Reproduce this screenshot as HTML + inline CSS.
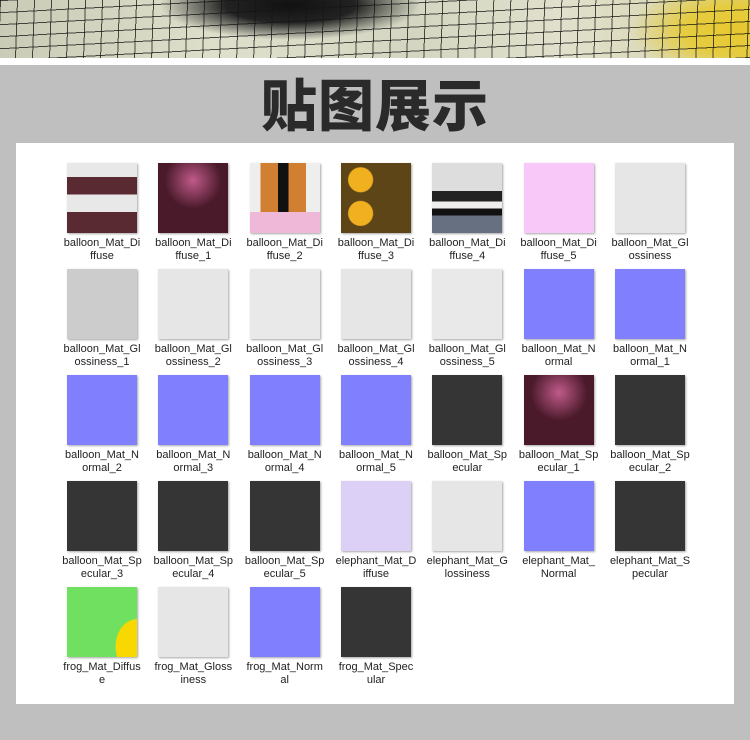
<!DOCTYPE html>
<html><head><meta charset="utf-8"><style>
*{margin:0;padding:0;box-sizing:border-box}
body{width:750px;height:740px;background:#bfbfbf;position:relative;overflow:hidden;font-family:"Liberation Sans","Noto Sans CJK SC",sans-serif}
#banner{position:absolute;left:0;top:0;width:750px;height:58px;
background:
repeating-linear-gradient(92deg,rgba(20,20,20,.75) 0 1px,transparent 1px 17px),
repeating-linear-gradient(-3deg,rgba(20,20,20,.75) 0 1px,transparent 1px 12px),
radial-gradient(ellipse 130px 35px at 290px 5px,#111 0,#222 50%,rgba(40,40,40,0) 100%),
radial-gradient(ellipse 110px 50px at 740px 30px,#e8c830 0,#e5cc40 50%,rgba(230,210,80,0) 100%),
linear-gradient(90deg,#c9cbb6,#dfe0cc 30%,#d4d6c2 55%,#e0e0cc 75%,#d9d4a8)}
#strip{position:absolute;left:0;top:58px;width:750px;height:7px;background:#fff}
#title{position:absolute;left:0;top:70px;width:750px;text-align:center;font-size:56px;font-weight:900;color:#2a2a2a;letter-spacing:1px;line-height:66px;font-family:"Noto Sans CJK SC","WenQuanYi Zen Hei",sans-serif}
#panel{position:absolute;left:16px;top:143px;width:718px;height:561px;background:#fff}
.it{position:absolute;width:92px}
.t{position:absolute;left:11px;top:0;width:70px;height:70px;box-shadow:1px 1px 2px rgba(0,0,0,.35)}
.l{position:absolute;left:0;top:74px;width:92px;text-align:center;font-size:11px;line-height:13px;color:#222;word-break:break-all}
</style></head><body>
<div id="banner"></div><div id="strip"></div>
<div id="title">贴图展示</div>
<div id="panel"></div>
<div id="items"></div>
<script>
var d=[
["balloon_Mat_Di","ffuse","linear-gradient(180deg,#e8e8e8 0 20%,#5a2a33 20% 45%,#e8e8e8 45% 70%,#5a2a33 70%)"],
["balloon_Mat_Di","ffuse_1","radial-gradient(circle at 50% 25%,#c05a8a,#4a1a2a 45%),#4a1a2a"],
["balloon_Mat_Di","ffuse_2","linear-gradient(180deg,transparent 0 70%,#f0b8d8 70%),linear-gradient(90deg,#eee 0 15%,#d08030 15% 40%,#111 40% 55%,#d08030 55% 80%,#eee 80%)"],
["balloon_Mat_Di","ffuse_3","radial-gradient(circle at 28% 24%,#f0b020 0 12px,transparent 13px),radial-gradient(circle at 28% 72%,#f0b020 0 12px,transparent 13px),#5e4518"],
["balloon_Mat_Di","ffuse_4","linear-gradient(180deg,#ddd 0 40%,#222 40% 55%,#eee 55% 65%,#111 65% 75%,#667080 75%)"],
["balloon_Mat_Di","ffuse_5","#f8c8f8"],
["balloon_Mat_Gl","ossiness","#e6e6e6"],
["balloon_Mat_Gl","ossiness_1","#cccccc"],
["balloon_Mat_Gl","ossiness_2","#e6e6e6"],
["balloon_Mat_Gl","ossiness_3","#e9e9e9"],
["balloon_Mat_Gl","ossiness_4","#e6e6e6"],
["balloon_Mat_Gl","ossiness_5","#e9e9e9"],
["balloon_Mat_N","ormal","#8080ff"],
["balloon_Mat_N","ormal_1","#8080ff"],
["balloon_Mat_N","ormal_2","#8080ff"],
["balloon_Mat_N","ormal_3","#8080ff"],
["balloon_Mat_N","ormal_4","#8080ff"],
["balloon_Mat_N","ormal_5","#8080ff"],
["balloon_Mat_Sp","ecular","#353535"],
["balloon_Mat_Sp","ecular_1","radial-gradient(circle at 50% 25%,#c05a8a,#4a1a2a 45%),#4a1a2a"],
["balloon_Mat_Sp","ecular_2","#353535"],
["balloon_Mat_Sp","ecular_3","#353535"],
["balloon_Mat_Sp","ecular_4","#353535"],
["balloon_Mat_Sp","ecular_5","#353535"],
["elephant_Mat_D","iffuse","#dcd0f6"],
["elephant_Mat_G","lossiness","#e6e6e6"],
["elephant_Mat_","Normal","#8080ff"],
["elephant_Mat_S","pecular","#353535"],
["frog_Mat_Diffus","e","radial-gradient(ellipse 22px 28px at 100% 85%,#f8d800 0 95%,transparent 100%),#70e060"],
["frog_Mat_Gloss","iness","#e6e6e6"],
["frog_Mat_Norm","al","#8080ff"],
["frog_Mat_Spec","ular","#353535"]];
var h="";
d.forEach(function(e,i){var c=i%7,r=Math.floor(i/7);
h+='<div class="it" style="left:'+(56+c*91.33).toFixed(1)+'px;top:'+(163+r*106)+'px"><div class="t" style="background:'+e[2]+'"></div><div class="l">'+e[0]+'<br>'+e[1]+'</div></div>';});
document.getElementById("items").innerHTML=h;
</script>
</body></html>
